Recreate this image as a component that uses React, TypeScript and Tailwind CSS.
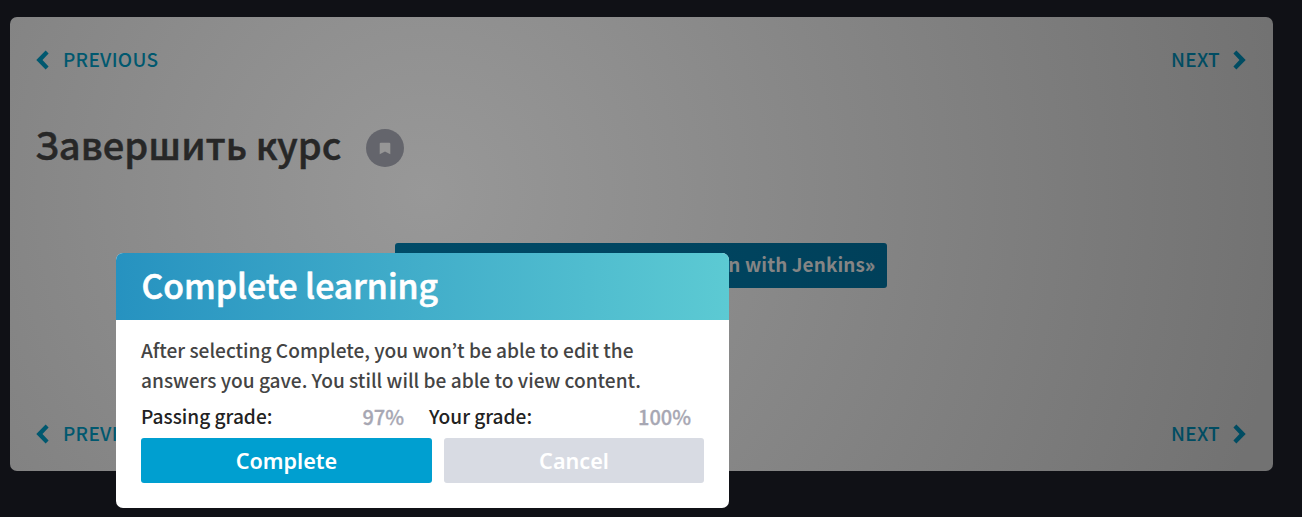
import React from "react";

function Chevron({ flip }: { flip?: boolean }) {
  return (
    <svg width="13" height="20" viewBox="0 0 13 20" className={flip ? "rotate-180" : ""}>
      <path d="M9.6 0.6 12.6 3.6 6.5 10 12.6 16.4 9.6 19.4 0.3 10Z" fill="currentColor" />
    </svg>
  );
}

function PageNav() {
  return (
    <nav className="flex h-[30px] items-center justify-between text-[19px] font-medium tracking-[0.3px]">
      <a className="flex items-center gap-[14px] text-[#00586f]">
        <Chevron />
        <span className="leading-[28px] pb-[2px]">PREVIOUS</span>
      </a>
      <a className="flex items-center gap-[13px] text-[#004c62]">
        <span className="leading-[28px] pb-[2px]">NEXT</span>
        <Chevron flip />
      </a>
    </nav>
  );
}

function CompleteDialog() {
  return (
    <div className="absolute left-[116px] top-[253px] flex h-[255px] w-[613px] flex-col overflow-hidden rounded-[7px] bg-white">
      <h2 className="h-[67px] whitespace-nowrap bg-linear-to-r from-[#2692c0] to-[#5ccad3] pl-[25.5px] text-[33.7px] font-medium leading-[64px] text-white [-webkit-text-stroke:0.6px_white]">
        Complete learning
      </h2>
      <div className="px-[25px] pt-[15px]">
        <p className="whitespace-nowrap text-[19.1px] font-medium leading-[30px] text-[#444]">
          After selecting Complete, you won’t be able to edit the
          <br />
          answers you gave. You still will be able to view content.
        </p>
        <div className="mt-[6px] flex h-[30px] whitespace-nowrap text-[19.1px] font-medium leading-[30px] text-[#222]">
          <div className="flex w-[263px] justify-between">
            <span>Passing grade:</span>
            <span className="pt-px text-[20px] text-[#a7a7b3] [-webkit-text-stroke:0.3px_#a7a7b3]">97%</span>
          </div>
          <div className="ml-[25px] flex w-[262px] justify-between">
            <span>Your grade:</span>
            <span className="pt-px text-[20px] text-[#a7a7b3] [-webkit-text-stroke:0.3px_#a7a7b3]">100%</span>
          </div>
        </div>
        <div className="mt-[7px] flex gap-3 font-['Noto_Sans',sans-serif] text-[21.6px] font-semibold text-white">
          <button className="h-[45px] w-[291px] rounded-[3px] bg-[#009fd0] pt-px">Complete</button>
          <button className="h-[45px] w-[260px] rounded-[3px] bg-[#d8dbe3] pt-px">Cancel</button>
        </div>
      </div>
    </div>
  );
}

export default function App() {
  return (
    <div className="relative h-[517px] w-[1302px] overflow-hidden bg-[#101116] pl-[10px] pt-[17px] font-['Noto_Sans_CJK_JP','Noto_Sans',sans-serif]">
      <main className="flex h-[454px] w-[1263px] flex-col rounded-[7px] bg-[radial-gradient(circle_at_415px_175px,#989898_0px,#8e8e8e_230px,#858585_430px,#727272_860px)] pl-[26px] pr-[27px] pt-7">
        <PageNav />
        <div className="mt-[53px] flex h-[40px] items-center">
          <h1 className="-ml-px w-[331px] whitespace-nowrap pb-[8px] text-[38.1px] font-medium leading-[40px] text-[#272727] [-webkit-text-stroke:0.5px_#272727]">Завершить курс</h1>
          <span className="flex size-[38px] items-center justify-center rounded-full bg-[#64656c]">
            <svg width="12" height="13" viewBox="0 0 12 13">
              <path d="M0.7 1.8Q0.7 0.7 1.8 0.7H10.2Q11.3 0.7 11.3 1.8V12.2L6 9.4 0.7 12.2Z" fill="#969696" />
            </svg>
          </span>
        </div>
        <button className="ml-[359px] mt-[75px] h-[45px] w-[492px] shrink-0 whitespace-nowrap rounded-[3px] bg-linear-to-r from-[#004b68] to-[#00405a] pb-[2px] pr-3 text-right text-[18.9px] font-bold tracking-[0.1px] text-[#858585]">
          Complete course «Automation with Jenkins<span className="[-webkit-text-stroke:0.5px_#858585]">»</span>
        </button>
        <div className="mt-[131px]">
          <PageNav />
        </div>
      </main>
      <CompleteDialog />
    </div>
  );
}
